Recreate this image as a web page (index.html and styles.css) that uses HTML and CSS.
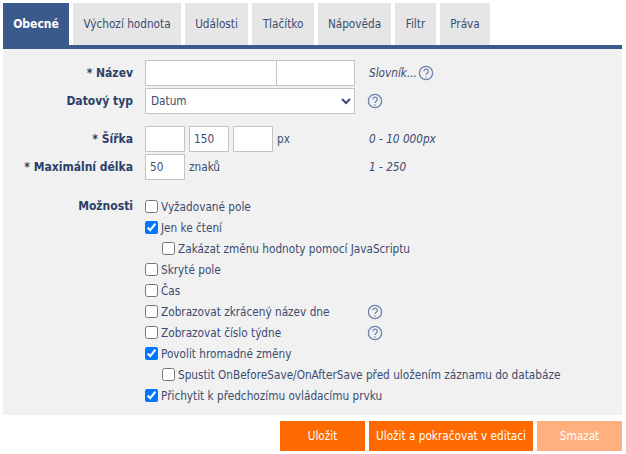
FILE: index.html
```html
<!DOCTYPE html>
<html lang="cs">
  <head>
    <meta charset="UTF-8" />
    <title>Datum</title>
    <link rel="stylesheet" href="styles.css">
  </head>
  <body>
    <nav class="tabs">
      <a class="tab active">Obecné</a>
      <a class="tab tab-default">Výchozí hodnota</a>
      <a class="tab tab-events">Události</a>
      <a class="tab tab-button">Tlačítko</a>
      <a class="tab tab-help">Nápověda</a>
      <a class="tab tab-filter">Filtr</a>
      <a class="tab tab-rights">Práva</a>
    </nav>

    <form class="panel">
      <div class="row">
        <label class="row-label">* Název</label>
        <div class="name-input">
          <input type="text" class="input name-a" />
          <input type="text" class="input name-b" />
        </div>
        <em class="hint">Slovník...</em>
        <svg class="help help-dict" viewBox="0 0 16 16"><circle cx="8" cy="8" r="6.6"/><path d="M5.8 6.3a2.2 2.2 0 1 1 3.4 1.9c-.8.5-1.2.9-1.2 1.8"/><path class="dot" d="M8 11.4v1.3"/></svg>
      </div>
      <div class="row">
        <label class="row-label">Datový typ</label>
        <select class="input type-select">
          <option>Datum</option>
        </select>
        <svg class="help help-type" viewBox="0 0 16 16"><circle cx="8" cy="8" r="6.6"/><path d="M5.8 6.3a2.2 2.2 0 1 1 3.4 1.9c-.8.5-1.2.9-1.2 1.8"/><path class="dot" d="M8 11.4v1.3"/></svg>
      </div>

      <div class="row row-width">
        <label class="row-label">* Šířka</label>
        <input type="text" class="input small" />
        <input type="text" class="input small" value="150" />
        <input type="text" class="input small" />
        <span class="unit">px</span>
        <em class="hint hint-side">0 - 10 000px</em>
      </div>
      <div class="row">
        <label class="row-label">* Maximální délka</label>
        <input type="text" class="input small" value="50" />
        <span class="unit">znaků</span>
        <em class="hint hint-side">1 - 250</em>
      </div>

      <div class="options">
        <span class="row-label">Možnosti</span>
        <ul class="option-list">
          <li><label><input type="checkbox" />Vyžadované pole</label></li>
          <li><label><input type="checkbox" checked />Jen ke čtení</label></li>
          <li class="sub"><label><input type="checkbox" />Zakázat změnu hodnoty pomocí JavaScriptu</label></li>
          <li><label><input type="checkbox" />Skryté pole</label></li>
          <li><label><input type="checkbox" />Čas</label></li>
          <li>
            <label class="with-help"><input type="checkbox" />Zobrazovat zkrácený název dne</label>
            <svg class="help" viewBox="0 0 16 16"><circle cx="8" cy="8" r="6.6"/><path d="M5.8 6.3a2.2 2.2 0 1 1 3.4 1.9c-.8.5-1.2.9-1.2 1.8"/><path class="dot" d="M8 11.4v1.3"/></svg>
          </li>
          <li>
            <label class="with-help"><input type="checkbox" />Zobrazovat číslo týdne</label>
            <svg class="help" viewBox="0 0 16 16"><circle cx="8" cy="8" r="6.6"/><path d="M5.8 6.3a2.2 2.2 0 1 1 3.4 1.9c-.8.5-1.2.9-1.2 1.8"/><path class="dot" d="M8 11.4v1.3"/></svg>
          </li>
          <li><label><input type="checkbox" checked />Povolit hromadné změny</label></li>
          <li class="sub"><label><input type="checkbox" />Spustit OnBeforeSave/OnAfterSave před uložením záznamu do databáze</label></li>
          <li><label><input type="checkbox" checked />Přichytit k předchozímu ovládacímu prvku</label></li>
        </ul>
      </div>
    </form>

    <div class="actions">
      <button class="btn btn-save">Uložit</button>
      <button class="btn btn-continue">Uložit a pokračovat v editaci</button>
      <button class="btn btn-delete">Smazat</button>
    </div>
  </body>
</html>
```

FILE: styles.css
```css
/* resets */
* {
  padding: 0;
  margin: 0;
  box-sizing: border-box;
}
body {
  font-family: "DejaVu Sans Condensed", "DejaVu Sans", sans-serif;
  font-size: 11.7px;
  color: #3b4c70;
  background-color: #fff;
  width: 626px;
  padding: 3px 4px 0 3px;
}

/* tabs */
.tabs {
  display: flex;
  height: 46px;
  border-bottom: 4px solid #3a5a8c;
}
.tab {
  width: 108px;
  height: 42px;
  line-height: 42px;
  margin-right: 4px;
  text-align: center;
  background-color: #e6e6e6;
}
.tab.active {
  width: 66px;
  background-color: #3a5a8c;
  color: #fff;
  font-size: 12px;
  font-weight: 700;
}
.tab-events {
  width: 63px;
}
.tab-button {
  width: 62px;
}
.tab-help {
  width: 73px;
}
.tab-filter {
  width: 41px;
}
.tab-rights {
  width: 50px;
  margin-right: 0;
}

/* form */
.panel {
  background-color: #f1f1f1;
  height: 366px;
  padding-top: 11px;
}
.row {
  position: relative;
  display: flex;
  align-items: center;
  height: 26px;
  margin-bottom: 2px;
}
.row-width {
  margin-top: 12px;
}
.row-label {
  flex: none;
  width: 130px;
  margin-right: 12px;
  text-align: right;
  font-size: 12px;
  font-weight: 700;
  color: #2b4068;
}
.input {
  height: 26px;
  border: 1px solid #c4c4c4;
  background-color: #fff;
  font-family: inherit;
  font-size: 11.7px;
  color: #3b4c70;
  padding: 0 4px;
  border-radius: 0;
}
.input:focus {
  outline: none;
}
.name-input {
  display: flex;
  width: 210px;
}
.name-a {
  width: 132px;
}
.name-b {
  width: 78px;
  border-left: none;
}
.type-select {
  width: 210px;
  padding: 0 1px;
}
.small {
  width: 40px;
  margin-right: 4px;
}
.hint {
  margin-left: 14px;
}
.hint-side {
  position: absolute;
  left: 366px;
  margin-left: 0;
}

/* help icon */
.help {
  flex: none;
  width: 16px;
  height: 16px;
  margin-left: 3px;
  fill: none;
  stroke: #6c84ab;
  stroke-width: 1.3;
}
.help-dict {
  margin-left: 1px;
}
.help-type {
  margin-left: 12px;
}

/* options */
.options {
  display: flex;
  margin-top: 16px;
}
.options .row-label {
  line-height: 21px;
}
.option-list {
  list-style: none;
}
.option-list li {
  display: flex;
  align-items: center;
  height: 21px;
}
.option-list label {
  display: flex;
  align-items: center;
}
.option-list input {
  width: 13px;
  height: 13px;
  margin-right: 3px;
  accent-color: #0075ff;
}
.option-list .sub {
  padding-left: 17px;
}
.with-help {
  width: 219px;
}

/* buttons */
.actions {
  display: flex;
  justify-content: flex-end;
  gap: 4px;
  margin-top: 6px;
}
.btn {
  height: 30px;
  border: none;
  background-color: #ff6a00;
  color: #fff;
  font-family: inherit;
  font-size: 11.7px;
}
.btn-save {
  width: 85px;
}
.btn-continue {
  width: 164px;
}
.btn-delete {
  width: 85px;
  background-color: #ffb07f;
}
```
